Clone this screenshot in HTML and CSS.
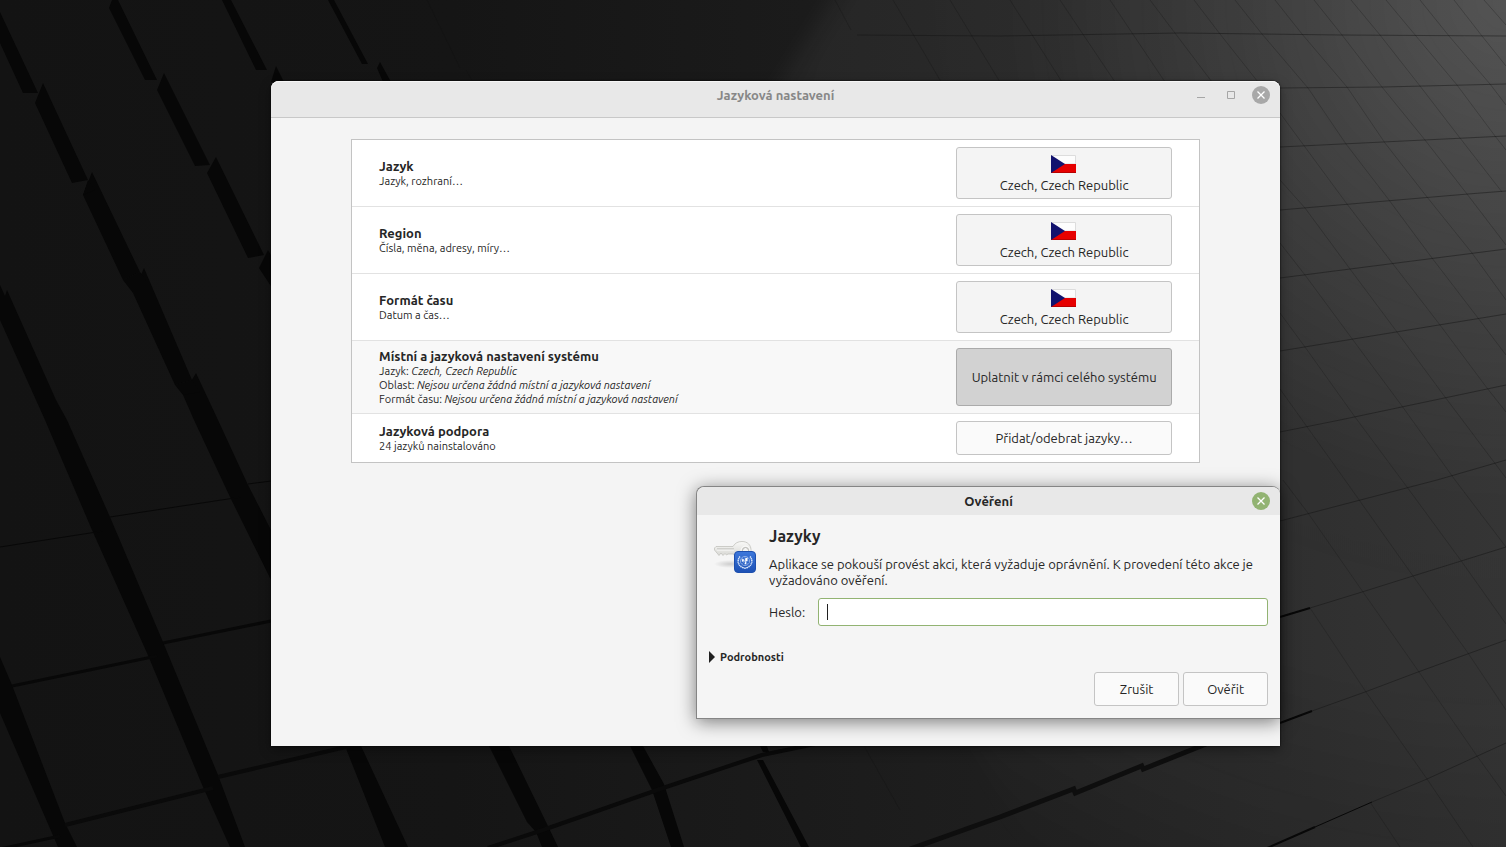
FILE: index.html
```html
<!DOCTYPE html>
<html lang="cs">
<head>
<meta charset="utf-8">
<title>Jazyková nastavení</title>
<link rel="stylesheet" href="styles.css">
</head>
<body>
<svg class="wallpaper" viewBox="0 0 1506 847" preserveAspectRatio="xMidYMid slice" aria-hidden="true">
  <defs>
    <linearGradient id="base" x1="0" y1="0" x2="1" y2="0">
      <stop offset="0" stop-color="#131313"/><stop offset=".3" stop-color="#151515"/>
      <stop offset=".65" stop-color="#1e1e1e"/><stop offset=".85" stop-color="#242424"/><stop offset="1" stop-color="#2a2a2a"/>
    </linearGradient>
    <radialGradient id="light" gradientUnits="userSpaceOnUse" cx="1506" cy="0" r="1000">
      <stop offset="0" stop-color="#fff" stop-opacity=".2"/><stop offset=".3" stop-color="#fff" stop-opacity=".11"/>
      <stop offset=".5" stop-color="#fff" stop-opacity=".055"/><stop offset=".7" stop-color="#fff" stop-opacity=".05"/><stop offset="1" stop-color="#fff" stop-opacity="0"/>
    </radialGradient>
    <filter id="soft" x="-20%" y="-20%" width="140%" height="140%" color-interpolation-filters="sRGB"><feGaussianBlur stdDeviation="12"/></filter>
    <filter id="edge" color-interpolation-filters="sRGB"><feGaussianBlur stdDeviation=".5"/></filter>
  </defs>
  <rect width="1506" height="847" fill="url(#base)"/>
  <path d="M872-60H1600V1000H1100L700 210Z" fill="url(#light)" filter="url(#soft)"/>
  <g fill="#070707" filter="url(#edge)">
    <path d="M0 12 38 93H23L0 43ZM43 83 88 180 72 183 35 103ZM92 172 140 272 123 280 83 195ZM144 268 192 380 175 385 133 293ZM196 373 218 420 248 485 271 530V580L230 497 194 420 183 395Z"/>
    <path d="M112 0H118L157 80H145L109 8ZM164 73 210 165 195 166 157 90ZM216 157 264 255 248 258 207 173ZM268 250 280 270V300L259 268ZM222 0H231L267 70H256ZM276 66 284 82H271ZM328 0H334L368 64H362ZM380 62 391 82H383L377 68Z"/>
    <path d="M88 180 95 190 83 195ZM140 272 146 280 133 293 123 280ZM192 380 200 392 183 395 175 385Z"/>
    <path d="M0 285 5 296 7 290 56 400 67 420 110 517 163 642 218 775 245 847H230L203 787 147 653 92 530 45 420 0 320ZM0 657 12 685 65 823 77 847H58L0 713ZM345 746H361L408 847H385Z"/>
    <path d="M489 746H509L547 824 558 847H542L536 832 527 822ZM630 746H643L664 784 684 847H671L652 790ZM760 746H767L769 752H763ZM757 760H763L809 847H801Z"/>
  </g>
  <g fill="none" stroke="#080808" filter="url(#edge)">
    <path stroke-width="1" d="M0 547 103 531M110 517 241 497M248 484 271 481"/>
    <path stroke-width="3" d="M12 686 157 656M163 643 271 621M0 849 60 836"/>
    <path stroke-width="4" stroke="#0a0a0a" d="M65 825 213 788M218 777 350 746M488 848 540 831 660 789 762 755 815 744"/>
    <path stroke-width="5" stroke="#0e0e0e" d="M910 849 1000 817 1076 788M1073 794 1144 765M1141 770 1206 744"/>
    <path stroke-width="2" d="M1265 849 1315 827M1280 617 1310 608M1280 723 1312 711"/>
    <path stroke-width="1" d="M1315 827 1372 802"/>
  </g>
  <g fill="none" stroke="#111" stroke-width="1">
    <path stroke-opacity=".45" d="M427 0 460 68M466 70 473 82M857 35 1000 36 1180 33 1341 35 1506 36M1280 88 1383 87 1506 84M1280 147 1424 140 1506 136M1280 210 1468 194 1506 191M1280 278 1506 249M1280 351 1506 314M1280 432 1340 420 1506 385M1280 521 1437 480 1506 460M1310 608 1362 592 1413 576 1506 547M1312 711 1365 692 1418 672 1506 640M1372 802 1427 779 1506 743"/>
    <path stroke-opacity=".25" d="M835 0 851 30M893 0 947 92M950 0 1000 82M1010 0 1062 82M1060 0 1115 82M1110 0 1165 82M1150 0 1212 82M1194 0 1220 34 1258 82M1235 0 1262 34 1308 88 1346 144 1389 200 1432 258 1478 318 1506 355M1275 0 1302 34 1347 87 1385 143 1427 197 1472 253 1506 300M1314 0 1342 35 1382 87 1425 140 1467 194 1506 245M1351 0 1380 35 1420 86 1460 138 1502 192M1386 0 1416 36 1457 85 1495 136 1506 150M1420 0 1449 36 1490 84 1506 105M1454 0 1482 36 1506 66M1484 0 1506 25M1280 113 1305 147 1347 204 1393 264 1440 325 1487 388 1506 412M1280 180 1305 208 1350 269 1397 332 1445 397 1506 478M1280 243 1305 275 1353 340 1402 406 1455 480 1506 547M1280 313 1305 347 1355 417 1407 487 1462 562 1506 624M1280 389 1345 480 1413 576 1468 653 1506 710M1283 480 1308 513 1363 592 1419 672 1477 756 1506 796M1310 608 1366 692 1427 779 1473 847M1370 802 1400 847M864 746 900 810"/>
  </g>
</svg>

<main class="window">
  <header class="titlebar">
    <h1 class="window-title">Jazyková nastavení</h1>
    <div class="window-controls">
      <button type="button" class="control" aria-label="Minimalizovat"><svg viewBox="0 0 18 18"><path d="M5 11.500h8" stroke="#a6a6a6"/></svg></button>
      <button type="button" class="control" aria-label="Maximalizovat"><svg viewBox="0 0 18 18"><path d="M5.500 5.500h7v7h-7z" fill="none" stroke="#a6a6a6"/></svg></button>
      <button type="button" class="control" aria-label="Zavřít"><svg viewBox="0 0 18 18"><circle cx="9" cy="9" r="9" fill="#a8a8a8"/><path d="m5.500 5.500 7 7m0-7-7 7" stroke="#fff" stroke-width="1.300"/></svg></button>
    </div>
  </header>

  <div class="settings">
    <section class="row">
      <div class="row-text"><h2>Jazyk</h2><p>Jazyk, rozhraní…</p></div>
      <button type="button" class="button locale">
        <svg class="flag" viewBox="0 0 26 18" aria-hidden="true"><path d="M.5 .5h24V9H.5z" fill="#fdfdfd" stroke="#ddd"/><path d="M0 9h25v8.500H0z" fill="#e60000"/><path d="M0 17h25v1H0z" fill="#b80000"/><path d="M0 0 14 9 0 18z" fill="#12126e"/></svg>
        <span>Czech, Czech Republic</span>
      </button>
    </section>
    <section class="row">
      <div class="row-text"><h2>Region</h2><p>Čísla, měna, adresy, míry…</p></div>
      <button type="button" class="button locale">
        <svg class="flag" viewBox="0 0 26 18" aria-hidden="true"><path d="M.5 .5h24V9H.5z" fill="#fdfdfd" stroke="#ddd"/><path d="M0 9h25v8.500H0z" fill="#e60000"/><path d="M0 17h25v1H0z" fill="#b80000"/><path d="M0 0 14 9 0 18z" fill="#12126e"/></svg>
        <span>Czech, Czech Republic</span>
      </button>
    </section>
    <section class="row">
      <div class="row-text"><h2>Formát času</h2><p>Datum a čas…</p></div>
      <button type="button" class="button locale">
        <svg class="flag" viewBox="0 0 26 18" aria-hidden="true"><path d="M.5 .5h24V9H.5z" fill="#fdfdfd" stroke="#ddd"/><path d="M0 9h25v8.500H0z" fill="#e60000"/><path d="M0 17h25v1H0z" fill="#b80000"/><path d="M0 0 14 9 0 18z" fill="#12126e"/></svg>
        <span>Czech, Czech Republic</span>
      </button>
    </section>
    <section class="row row-active">
      <div class="row-text">
        <h2>Místní a jazyková nastavení systému</h2>
        <p>Jazyk: <em>Czech, Czech Republic</em></p>
        <p>Oblast: <em>Nejsou určena žádná místní a jazyková nastavení</em></p>
        <p>Formát času: <em>Nejsou určena žádná místní a jazyková nastavení</em></p>
      </div>
      <button type="button" class="button pressed">Uplatnit v rámci celého systému</button>
    </section>
    <section class="row">
      <div class="row-text"><h2>Jazyková podpora</h2><p>24 jazyků nainstalováno</p></div>
      <button type="button" class="button">Přidat/odebrat jazyky…</button>
    </section>
  </div>

  <form class="dialog" role="dialog" aria-labelledby="dialog-title">
    <header class="dialog-bar">
      <h2 class="dialog-title" id="dialog-title">Ověření</h2>
      <div class="window-controls">
        <button type="button" class="control" aria-label="Zavřít"><svg viewBox="0 0 18 18"><circle cx="9" cy="9" r="9" fill="#92b372"/><path d="m5.500 5.500 7 7m0-7-7 7" stroke="#fff" stroke-width="1.300"/></svg></button>
      </div>
    </header>
    <div class="dialog-body">
      <svg class="auth-icon" viewBox="0 0 48 48" aria-hidden="true">
        <defs>
          <linearGradient id="metal" x1="0" y1="0" x2="0" y2="1"><stop offset="0" stop-color="#fafaf8"/><stop offset="1" stop-color="#d2d2ce"/></linearGradient>
          <linearGradient id="blue" x1="0" y1="0" x2="0" y2="1"><stop offset="0" stop-color="#3d78dc"/><stop offset="1" stop-color="#1c50b4"/></linearGradient>
          <radialGradient id="shade"><stop offset="0" stop-color="#000" stop-opacity=".16"/><stop offset="1" stop-color="#000" stop-opacity="0"/></radialGradient>
        </defs>
        <ellipse cx="21" cy="38" rx="16" ry="4" fill="url(#shade)"/>
        <path fill="url(#metal)" stroke="#c2c2bd" stroke-width=".8" fill-rule="evenodd" d="M7 20.500H24C26 17 29 15.500 33 15.500 38.500 15.500 42 19 42 24 42 29 38 32 33 32 28.500 32 25.500 31 24.500 28H19L17.500 29 16 27.500 14 29.500 12 27 10 29.500 8 27 5.500 24V22Z"/>
        <circle cx="36.500" cy="24.500" r="3" fill="#f5f5f5" stroke="#b3b3ae"/>
        <circle cx="36.500" cy="24.500" r="4.500" fill="none" stroke="#fff" stroke-opacity=".8"/>
        <path d="M8 23H25" stroke="#aaaaa4" stroke-width=".8"/>
        <path d="M8 24H25" stroke="#fff" stroke-width=".8"/>
        <rect x="25.500" y="25.500" width="21" height="21" rx="3.500" fill="url(#blue)" stroke="#1d4fae"/>
        <g fill="none" stroke="#dce8fb">
          <circle cx="36" cy="35" r="4.600" stroke-width=".6" stroke-opacity=".8"/>
          <path d="M31 30.500C28 34 28.500 39 33.500 41.500M41 30.500C44 34 43.500 39 38.500 41.500M33.500 41.500 37 42.500M38.500 41.500 35 42.500" stroke-width="1.500" stroke-dasharray="1.300 .5"/>
          <path d="M36 30.500V39.500M31.500 35H40.500M33 32 39 38M39 32 33 38" stroke-width=".4" stroke-opacity=".7"/>
        </g>
        <path fill="#fff" d="M32.500 33 35 33.500 34.500 35.500 33.500 36ZM36 32.500 38.500 31.500 38.500 35 37 35.500 37.500 38.500 35.500 38 36.500 35.500Z"/>
      </svg>
      <div class="dialog-content">
        <h3>Jazyky</h3>
        <p>Aplikace se pokouší provést akci, která vyžaduje oprávnění. K provedení této akce je vyžadováno ověření.</p>
        <div class="field">
          <label for="password">Heslo:</label>
          <span class="entry"><input type="password" id="password"></span>
        </div>
      </div>
    </div>
    <details class="more"><summary>Podrobnosti</summary></details>
    <div class="actions">
      <button type="button" class="button">Zrušit</button>
      <button type="submit" class="button">Ověřit</button>
    </div>
  </form>
</main>
</body>
</html>
```
FILE: styles.css
```css
* { box-sizing: border-box; }

body {
  position: relative;
  min-height: 100vh;
  margin: 0;
  padding: 81px 15% 101px 18%;
  overflow: hidden;
  background: #161616;
  color: #262626;
  font: 13px/16px Ubuntu, "Noto Sans", sans-serif;
}

h1, h2, h3, p { margin: 0; }

.wallpaper {
  position: absolute;
  inset: 0;
  width: 100%;
  height: 100%;
}

.window {
  position: relative;
  min-height: 665px;
  border-radius: 8px 8px 0 0;
  background: #f4f4f4;
  box-shadow: 0 0 2px #000, 0 4px 12px rgba(0, 0, 0, .35);
}

.titlebar {
  display: grid;
  grid-template-columns: 1fr auto 1fr;
  align-items: start;
  height: 37px;
  padding: 5px 10px;
  border-bottom: 1px solid #c8c8c8;
  border-radius: 8px 8px 0 0;
  background: #e8e8e8;
  box-shadow: inset 0 1px #f6f6f6;
}

.window-title {
  grid-column: 2;
  color: #878787;
  font-size: 13px;
  font-weight: 600;
  line-height: 18px;
}

.window-controls {
  display: flex;
  grid-column: 3;
  justify-self: end;
  gap: 12px;
}

.control {
  width: 18px;
  height: 18px;
  padding: 0;
  border: 0;
  background: none;
}

.control svg { display: block; }

.settings {
  margin: 21px 80px 0;
  border: 1px solid #c3c3c3;
  background: #fff;
}

.row {
  display: flex;
  align-items: center;
  justify-content: space-between;
  padding: 7px 27px;
}

.row + .row { border-top: 1px solid #e2e2e2; }
.row-active { background: #f8f8f8; }
.row h2 { font-size: 13px; font-weight: 700; line-height: 16px; }
.row p { font-size: 11px; line-height: 14px; }

.button {
  min-height: 34px;
  padding: 0;
  border: 1px solid #c4c4c4;
  border-radius: 3px;
  background: #fafafa;
  color: #262626;
  font: inherit;
}

.row .button { width: 216px; }

.locale {
  display: flex;
  flex-direction: column;
  align-items: center;
  justify-content: center;
  gap: 4px;
  height: 52px;
  padding-top: 2px;
}

.button.locale { background: #f4f4f4; }

.flag { width: 26px; height: 18px; }

.button.pressed {
  align-self: stretch;
  border-color: #ababab;
  background: #d2d2d2;
}

.dialog {
  position: absolute;
  right: 0;
  bottom: 27px;
  left: 425px;
  border: 1px solid #858585;
  border-right: 0;
  border-radius: 8px 8px 0 0;
  background: #f5f5f5;
  box-shadow: 0 3px 18px rgba(0, 0, 0, .5);
}

.dialog-bar {
  display: grid;
  grid-template-columns: 1fr auto 1fr;
  align-items: center;
  height: 28px;
  padding: 0 10px;
  border-radius: 8px 8px 0 0;
  background: #e8e8e8;
}

.dialog-title {
  grid-column: 2;
  font-size: 13px;
  font-weight: 600;
  line-height: 18px;
}

.dialog-body {
  display: flex;
  gap: 12px;
  padding: 11px 12px 0;
}

.auth-icon { flex: none; width: 48px; height: 48px; }
.dialog-content { flex: 1; }

.dialog-content h3 {
  margin-bottom: 10px;
  font-size: 16px;
  line-height: 20px;
}

.field {
  display: flex;
  align-items: center;
  gap: 13px;
  margin-top: 10px;
}

.entry { position: relative; flex: 1; }

.entry::before {
  content: "";
  position: absolute;
  top: 6px;
  left: 9px;
  width: 1px;
  height: 16px;
  background: #202020;
}

.entry input {
  display: block;
  width: 100%;
  height: 28px;
  padding: 0 8px;
  border: 1px solid #92b372;
  border-radius: 3px;
  outline: 0;
  background: #fff;
  font: inherit;
}

.more { padding: 23px 12px 0; }

.more summary {
  display: flex;
  align-items: center;
  gap: 5px;
  font-size: 11px;
  font-weight: 700;
}

.more summary::before {
  content: "";
  border: 6px solid transparent;
  border-right: 0;
  border-left-color: #202020;
}

.actions {
  display: flex;
  justify-content: flex-end;
  gap: 4px;
  padding: 7px 12px 12px;
}

.actions .button { width: 85px; }
```
